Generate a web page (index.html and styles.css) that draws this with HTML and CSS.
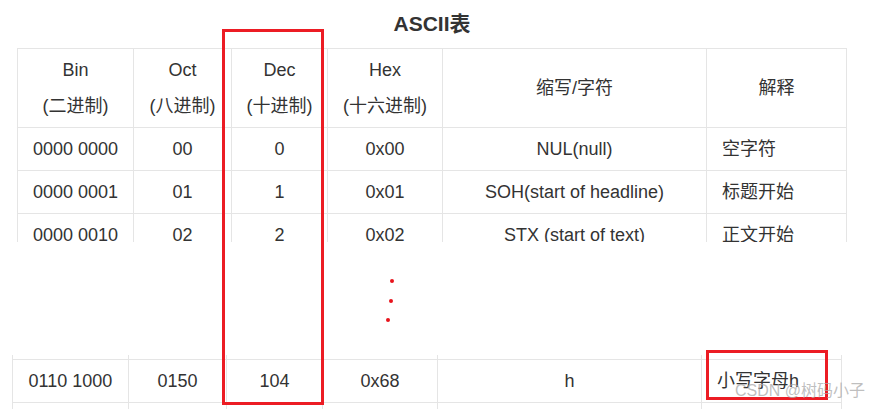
FILE: index.html
```html
<!DOCTYPE html>
<html lang="zh">
<head>
<meta charset="utf-8">
<title>ASCII表</title>
<link rel="stylesheet" href="styles.css">
</head>
<body>
<div class="page">
  <h1 class="title">ASCII表</h1>

  <div class="clip clip-top">
    <table class="ascii">
      <colgroup>
        <col class="c-bin"><col class="c-oct"><col class="c-dec"><col class="c-hex"><col class="c-abbr"><col class="c-desc">
      </colgroup>
      <tr class="head">
        <td>Bin<br>(二进制)</td>
        <td>Oct<br>(八进制)</td>
        <td>Dec<br>(十进制)</td>
        <td>Hex<br>(十六进制)</td>
        <td>缩写/字符</td>
        <td>解释</td>
      </tr>
      <tr>
        <td>0000 0000</td><td>00</td><td>0</td><td>0x00</td><td>NUL(null)</td><td class="left">空字符</td>
      </tr>
      <tr>
        <td>0000 0001</td><td>01</td><td>1</td><td>0x01</td><td>SOH(start of headline)</td><td class="left">标题开始</td>
      </tr>
      <tr>
        <td>0000 0010</td><td>02</td><td>2</td><td>0x02</td><td>STX (start of text)</td><td class="left">正文开始</td>
      </tr>
    </table>
  </div>

  <div class="gap">
    <span class="dot d1"></span>
    <span class="dot d2"></span>
    <span class="dot d3"></span>
  </div>

  <div class="clip clip-bottom">
    <table class="ascii shifted">
      <colgroup>
        <col class="c-bin"><col class="c-oct"><col class="c-dec"><col class="c-hex"><col class="c-abbr"><col class="c-desc">
      </colgroup>
      <tr>
        <td>&nbsp;</td><td>&nbsp;</td><td>&nbsp;</td><td>&nbsp;</td><td>&nbsp;</td><td class="left">&nbsp;</td>
      </tr>
      <tr>
        <td>0110 1000</td><td>0150</td><td>104</td><td>0x68</td><td>h</td><td class="left">小写字母h</td>
      </tr>
      <tr>
        <td>&nbsp;</td><td>&nbsp;</td><td>&nbsp;</td><td>&nbsp;</td><td>&nbsp;</td><td class="left">&nbsp;</td>
      </tr>
    </table>
  </div>

  <div class="mark mark-dec"></div>
  <div class="mark mark-h"></div>
  <div class="watermark">CSDN @树码小子</div>
</div>
</body>
</html>
```

FILE: styles.css
```css
html, body {
  margin: 0;
  padding: 0;
  background: #ffffff;
}

.page {
  position: relative;
  width: 870px;
  height: 409px;
  overflow: hidden;
  font-family: "Liberation Sans", Arial, "Noto Sans CJK SC", sans-serif;
  color: #333333;
}

.title {
  margin: 0;
  height: 48px;
  line-height: 48px;
  font-size: 21px;
  font-weight: bold;
  text-align: center;
  padding-right: 6px;
  color: #333333;
}

.clip {
  overflow: hidden;
}

.clip-top {
  height: 194px;
  padding-left: 17px;
}

.gap {
  position: relative;
  height: 113px;
}

.clip-bottom {
  height: 54px;
  padding-left: 12px;
}

.ascii {
  border-collapse: collapse;
  table-layout: fixed;
  width: 829px;
  font-size: 18px;
}

.shifted {
  margin-top: -39px;
}

.c-bin { width: 116px; }
.c-oct { width: 98px; }
.c-dec { width: 96px; }
.c-hex { width: 115px; }
.c-abbr { width: 264px; }
.c-desc { width: 140px; }

.ascii td {
  border: 1px solid #e5e5e5;
  padding: 3px 4px;
  line-height: 36px;
  text-align: center;
  vertical-align: middle;
  white-space: nowrap;
}

.ascii td.left {
  text-align: left;
  padding-left: 15px;
}

.dot {
  position: absolute;
  width: 4px;
  height: 4px;
  border-radius: 50%;
  background: #e8131c;
}

.d1 { left: 390px; top: 37px; }
.d2 { left: 389px; top: 57px; }
.d3 { left: 386px; top: 76px; }

.mark {
  position: absolute;
  border: 3px solid #ec1c24;
  box-sizing: border-box;
}

.mark-dec {
  left: 222px;
  top: 29px;
  width: 102px;
  height: 376px;
}

.mark-h {
  left: 706px;
  top: 350px;
  width: 122px;
  height: 50px;
}

.watermark {
  position: absolute;
  left: 735px;
  top: 381px;
  font-size: 16px;
  line-height: 20px;
  color: rgba(170, 170, 170, 0.75);
  white-space: nowrap;
}
```
